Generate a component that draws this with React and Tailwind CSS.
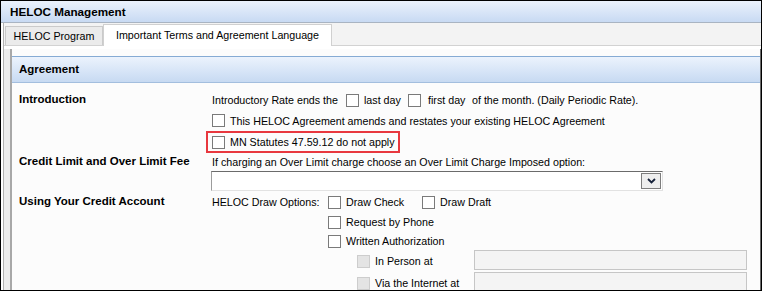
import React from "react";

function Box({ disabled = false }) {
  return disabled ? (
    <span className="inline-block w-[13px] h-[13px] shrink-0 border border-[#cdcdcd] bg-[#e4e4e4]" />
  ) : (
    <span className="inline-block w-[13px] h-[13px] shrink-0 border border-[#7a7a7a] bg-white" />
  );
}

export default function App() {
  return (
    <div className="w-[762px] h-[291px] overflow-hidden border border-black bg-white text-black font-['Liberation_Sans',Arial,sans-serif] flex flex-col">
      {/* Title bar */}
      <div className="h-[22px] shrink-0 border-b border-[#a9b4c2] bg-gradient-to-b from-[#ebf2fc] to-[#c8daf3] pl-[9px] flex items-center text-[11.7px] font-bold leading-none">
        HELOC Management
      </div>

      {/* Body */}
      <div className="flex-1 pl-[2px] flex flex-col min-h-0">
        <div className="flex-1 border-l border-[#b2b2b2] flex flex-col min-h-0">
          {/* Tabs */}
          <div className="h-[23px] shrink-0 bg-[#f3f3f3] border-b border-[#d2d2d2] flex items-end pl-[1px] text-[10.7px] leading-none">
            <div className="w-[98px] h-[19px] border border-b-0 border-[#cacaca] bg-[#ebebeb] flex items-center justify-center pt-[1px]">
              HELOC Program
            </div>
            <div className="relative z-10 -mb-px w-[229px] h-[22px] border border-b-0 border-[#d0d0d0] bg-white flex items-start justify-center pt-[5px]">
              Important Terms and Agreement Language
            </div>
          </div>

          {/* Content */}
          <div className="flex-1 pt-[3px] flex min-h-0">
            <div className="w-[6px] shrink-0 bg-[#ededed]" />
            <div className="flex-1 border-l-2 border-[#a8a8a8] border-r border-r-[#6a6a6a] bg-[#fcfcfc] pt-[7px] min-h-0">
              {/* Section header */}
              <div className="h-[27px] border-t border-b border-t-[#86abd4] border-b-[#a3bede] bg-gradient-to-b from-[#ecf3fd] to-[#c7daf2] pl-[7px] flex items-center text-[11.5px] font-bold leading-none">
                Agreement
              </div>

              <div className="pt-[7px] pl-[7px] grid grid-cols-[193px_1fr] text-[10.7px] leading-none">
                {/* Introduction */}
                <div className="h-[20px] flex items-center font-bold text-[11.5px]">Introduction</div>
                <div className="flex flex-col">
                  <div className="h-[20px] flex items-center">
                    <span className="w-[134px] shrink-0">Introductory Rate ends the</span>
                    <Box />
                    <span className="ml-[5px] w-[44px] shrink-0">last day</span>
                    <Box />
                    <span className="ml-[7px] w-[44px] shrink-0">first day</span>
                    <span>of the month. (Daily Periodic Rate).</span>
                  </div>
                  <div className="h-[21px] flex items-center">
                    <Box />
                    <span className="ml-[5px] pt-[2px]">This HELOC Agreement amends and restates your existing HELOC Agreement</span>
                  </div>
                  <div className="-ml-[6px] w-[194px] h-[22px] border-2 border-[#e8383f] flex items-center pl-[4px]">
                    <Box />
                    <span className="ml-[5px] whitespace-nowrap">MN Statutes 47.59.12 do not apply</span>
                  </div>
                </div>

                {/* Credit Limit */}
                <div className="h-[18px] flex items-center font-bold text-[11.5px]">Credit Limit and Over Limit Fee</div>
                <div className="flex flex-col">
                  <div className="h-[18px] flex items-center">
                    If charging an Over Limit charge choose an Over Limit Charge Imposed option:
                  </div>
                  <div className="-ml-px w-[452px] h-[20px] border border-t-[#6b6b6b] border-l-[#9c9c9c] border-r-[#e2e2e2] border-b-[#e2e2e2] bg-white flex items-center justify-end pr-[1px]">
                    <div className="w-[20px] h-[16px] border border-[#7d7d7d] bg-[#eeeeee] flex items-center justify-center">
                      <svg width="9" height="6" viewBox="0 0 9 6">
                        <path d="M1 1 L4.5 4.5 L8 1" fill="none" stroke="#16223a" strokeWidth="1.8" />
                      </svg>
                    </div>
                  </div>
                </div>

                {/* Using Your Credit Account */}
                <div className="mt-[1px] h-[20px] flex items-center font-bold text-[11.5px]">Using Your Credit Account</div>
                <div className="mt-[1px] flex flex-col">
                  <div className="h-[20px] flex items-center">
                    <span className="w-[116px] shrink-0">HELOC Draw Options:</span>
                    <Box />
                    <span className="ml-[5px] w-[76px] shrink-0">Draw Check</span>
                    <Box />
                    <span className="ml-[5px]">Draw Draft</span>
                  </div>
                  <div className="h-[20px] flex items-center pl-[116px]">
                    <Box />
                    <span className="ml-[5px]">Request by Phone</span>
                  </div>
                  <div className="h-[18px] flex items-center pl-[116px]">
                    <Box />
                    <span className="ml-[5px]">Written Authorization</span>
                  </div>
                  <div className="h-[22px] flex items-center pl-[145px]">
                    <Box disabled />
                    <span className="ml-[5px] w-[99px] shrink-0">In Person at</span>
                    <div className="self-start w-[273px] h-[20px] border border-[#c6c6c6] bg-[#f4f4f4]" />
                  </div>
                  <div className="h-[22px] flex items-center pl-[145px]">
                    <Box disabled />
                    <span className="ml-[5px] w-[99px] shrink-0">Via the Internet at</span>
                    <div className="self-start w-[273px] h-[20px] border border-[#c6c6c6] bg-[#f4f4f4]" />
                  </div>
                </div>
              </div>
            </div>
          </div>
        </div>
      </div>
    </div>
  );
}
